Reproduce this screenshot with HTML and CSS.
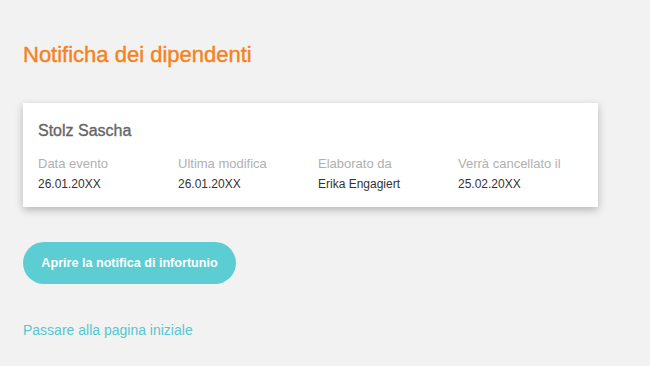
FILE: index.html
```html
<!DOCTYPE html>
<html lang="it">
<head>
<meta charset="utf-8">
<link rel="stylesheet" href="styles.css">
</head>
<body>
<main class="page">
  <h1 class="title">Notificha dei dipendenti</h1>
  <section class="card">
    <h2 class="name">Stolz Sascha</h2>
    <div class="fields">
      <div class="field"><div class="label">Data evento</div><div class="value">26.01.20XX</div></div>
      <div class="field"><div class="label">Ultima modifica</div><div class="value">26.01.20XX</div></div>
      <div class="field"><div class="label">Elaborato da</div><div class="value">Erika Engagiert</div></div>
      <div class="field"><div class="label">Verrà cancellato il</div><div class="value">25.02.20XX</div></div>
    </div>
  </section>
  <button class="btn">Aprire la notifica di infortunio</button>
  <a class="link" href="#">Passare alla pagina iniziale</a>
</main>
</body>
</html>
```
FILE: styles.css
```css
html, body {
  margin: 0;
  padding: 0;
  background: #f2f2f2;
  font-family: "Liberation Sans", Arial, sans-serif;
}
.page {
  padding: 42px 52px 0 23px;
  display: flex;
  flex-direction: column;
  align-items: flex-start;
}
.title {
  margin: 0;
  font-size: 22px;
  line-height: 26px;
  font-weight: normal;
  color: #f58220;
  -webkit-text-stroke: 0.4px #f58220;
}
.card {
  margin-top: 35px;
  background: #fff;
  box-shadow: 0 3px 8px rgba(0,0,0,0.25);
  padding: 18px 15px 14px 15px;
  width: 575px;
  box-sizing: border-box;
}
.name {
  margin: 0;
  font-size: 16px;
  line-height: 20px;
  font-weight: normal;
  color: #666;
  -webkit-text-stroke: 0.35px #666;
}
.fields {
  margin-top: 14px;
  display: grid;
  grid-template-columns: 140px 140px 140px 140px;
}
.label {
  font-size: 13px;
  line-height: 18px;
  color: #b0b0b0;
}
.value {
  font-size: 12px;
  line-height: 18px;
  color: #333;
  margin-top: 2px;
}
.btn {
  margin-top: 35px;
  width: 213px;
  height: 42px;
  border: none;
  border-radius: 21px;
  background: #5bcdd3;
  color: #fff;
  font-family: "Liberation Sans", Arial, sans-serif;
  font-size: 12.6px;
  font-weight: bold;
  padding: 0;
}
.link {
  margin-top: 37px;
  font-size: 14px;
  line-height: 18px;
  color: #55c7d0;
  text-decoration: none;
}
```
